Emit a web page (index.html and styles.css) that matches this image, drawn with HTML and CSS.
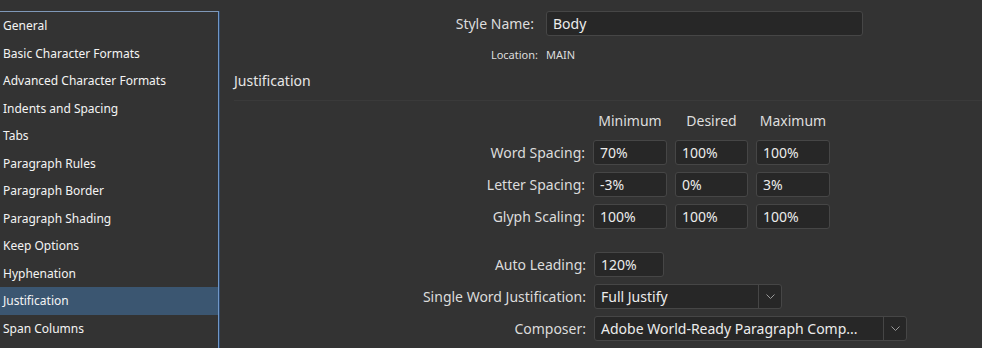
FILE: index.html
```html
<!DOCTYPE html>
<html>
<head>
<meta charset="utf-8">
<link rel="stylesheet" href="styles.css">
</head>
<body>
<div class="dialog">
  <aside class="sidebar">
    <ul class="cat-list">
      <li>General</li>
      <li>Basic Character Formats</li>
      <li>Advanced Character Formats</li>
      <li>Indents and Spacing</li>
      <li>Tabs</li>
      <li>Paragraph Rules</li>
      <li>Paragraph Border</li>
      <li>Paragraph Shading</li>
      <li>Keep Options</li>
      <li>Hyphenation</li>
      <li class="selected">Justification</li>
      <li>Span Columns</li>
    </ul>
  </aside>
  <main class="pane">
    <div class="meta">
      <label class="meta-label big">Style Name:</label>
      <div class="field name-field">Body</div>
      <span class="meta-label small">Location:</span>
      <span class="meta-value">MAIN</span>
    </div>
    <h2 class="section-title">Justification</h2>
    <div class="spacing">
      <span></span>
      <span class="col-head">Minimum</span>
      <span class="col-head">Desired</span>
      <span class="col-head">Maximum</span>

      <span class="row-label">Word Spacing:</span>
      <div class="field">70%</div>
      <div class="field">100%</div>
      <div class="field">100%</div>

      <span class="row-label">Letter Spacing:</span>
      <div class="field">-3%</div>
      <div class="field">0%</div>
      <div class="field">3%</div>

      <span class="row-label">Glyph Scaling:</span>
      <div class="field">100%</div>
      <div class="field">100%</div>
      <div class="field">100%</div>
    </div>
    <div class="options">
      <span class="row-label">Auto Leading:</span>
      <div><div class="field leading">120%</div></div>

      <span class="row-label">Single Word Justification:</span>
      <div><div class="select swj"><span class="select-text">Full Justify</span><span class="select-btn"><svg width="9" height="5" viewBox="0 0 9 5"><polyline points="0.5,0.5 4.5,4.5 8.5,0.5" fill="none" stroke="#9a9a9a" stroke-width="1"/></svg></span></div></div>

      <span class="row-label">Composer:</span>
      <div><div class="select composer"><span class="select-text">Adobe World-Ready Paragraph Comp...</span><span class="select-btn"><svg width="9" height="5" viewBox="0 0 9 5"><polyline points="0.5,0.5 4.5,4.5 8.5,0.5" fill="none" stroke="#9a9a9a" stroke-width="1"/></svg></span></div></div>
    </div>
  </main>
</div>
</body>
</html>
```

FILE: styles.css
```css
html, body {
  margin: 0;
  padding: 0;
  background: #333333;
  height: 100%;
  overflow: hidden;
}
body {
  font-family: "Noto Sans", "Open Sans", sans-serif;
  color: #dddddd;
}
.dialog {
  display: flex;
  height: 348px;
}
.sidebar {
  width: 218px;
  flex: none;
  margin-top: 11px;
  border-top: 1px solid #7f98b8;
  border-right: 1px solid #7097c8;
  box-shadow: 1px 0 0 #2c4669;
}
.cat-list {
  list-style: none;
  margin: 0;
  padding: 0;
}
.cat-list li {
  height: 27.5px;
  line-height: 27.5px;
  padding-left: 3px;
  font-size: 12px;
  color: #f4f4f4;
  white-space: nowrap;
}
.cat-list li.selected {
  background: #3b5671;
}
.pane {
  flex: 1;
  padding-left: 14px;
  padding-top: 11px;
}
.meta {
  display: grid;
  grid-template-columns: 305px 317px;
  column-gap: 8px;
  align-items: center;
}
.meta-label {
  text-align: right;
  white-space: nowrap;
}
.meta-label.big {
  font-size: 14px;
  padding-right: 4px;
}
.meta-label.small, .meta-value {
  font-size: 11px;
  margin-top: 8px;
  line-height: 22px;
}
.field {
  box-sizing: border-box;
  height: 25px;
  background: #272727;
  border: 1px solid #464646;
  border-radius: 3px;
  font-size: 14px;
  line-height: 23px;
  padding-left: 6px;
  color: #ececec;
  white-space: nowrap;
}
.name-field {
  width: 317px;
}
.section-title {
  margin: 5px 0 0 1px;
  font-weight: normal;
  font-size: 14px;
  line-height: 20px;
  color: #e6e6e6;
  padding-bottom: 9px;
  border-bottom: 1px solid #3a3a3a;
}
.spacing {
  display: grid;
  grid-template-columns: 352px 74px 73px 74px;
  column-gap: 8px;
  row-gap: 7px;
  margin-top: 10px;
  align-items: center;
}
.col-head {
  text-align: center;
  font-size: 14px;
  line-height: 18px;
  margin-top: 1px;
  margin-bottom: 3px;
  color: #dedede;
}
.row-label {
  text-align: right;
  font-size: 14px;
  white-space: nowrap;
  color: #dcdcdc;
}
.options {
  display: grid;
  grid-template-columns: 353px auto;
  column-gap: 8px;
  row-gap: 7px;
  margin-top: 23px;
  align-items: center;
}
.leading {
  width: 70px;
}
.select {
  box-sizing: border-box;
  display: flex;
  height: 25px;
  background: #272727;
  border: 1px solid #464646;
  border-radius: 3px;
  color: #ececec;
  font-size: 14px;
}
.select-text {
  flex: 1;
  padding-left: 6px;
  line-height: 23px;
  white-space: nowrap;
  overflow: hidden;
}
.select-btn {
  width: 22px;
  flex: none;
  border-left: 1px solid #464646;
  display: flex;
  align-items: center;
  justify-content: center;
}
.swj {
  width: 188px;
}
.composer {
  width: 313px;
}
```
